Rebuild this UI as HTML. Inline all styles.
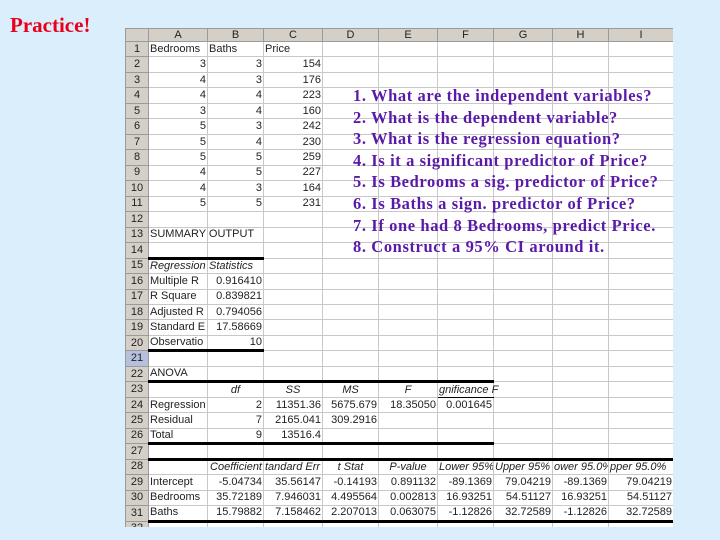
<!DOCTYPE html>
<html><head><meta charset="utf-8"><style>
body{margin:0;width:720px;height:540px;background:#dbeefb;position:relative;overflow:hidden;font-family:"Liberation Sans",sans-serif}
.title{position:absolute;left:10px;top:13px;color:#e8001c;font:bold 21px "Liberation Serif",serif}
.sheet{position:absolute;left:125px;top:28px;width:548px;height:499px;background:#fff;overflow:hidden}
table{border-collapse:collapse;table-layout:fixed;width:548px;font-size:11px;color:#222}
td{border:1px solid #c8c8c8;height:14px;padding:0 1px;white-space:nowrap;overflow:hidden;line-height:13px;box-sizing:border-box}
tr{height:15.47px}
tr.h{height:13px}
tr.h td{background:#d4d0c8;text-align:center;height:13px;border-color:#9a9a9a;line-height:11px}
td.r{background:#d4d0c8;text-align:center;border-color:#9a9a9a;padding:0}
.n{text-align:right}.i{font-style:italic}.c{text-align:center}
.v{overflow:visible}
.tt{border-top:3px solid #000}
.tb{border-bottom:1px solid #000}
.q{position:absolute;left:353px;top:85px;color:#5a1aa8;font:bold 16.5px "Liberation Serif",serif;letter-spacing:0.6px;line-height:21.6px}
</style></head><body>
<div class="title">Practice!</div>
<div class="sheet"><table>
<colgroup><col style="width:23px"><col style="width:59px"><col style="width:56px"><col style="width:59px"><col style="width:56px"><col style="width:59px"><col style="width:56px"><col style="width:59px"><col style="width:56px"><col style="width:65px"></colgroup>
<tr class="h"><td></td><td>A</td><td>B</td><td>C</td><td>D</td><td>E</td><td>F</td><td>G</td><td>H</td><td>I</td></tr>
<tr><td class="r">1</td><td>Bedrooms</td><td>Baths</td><td>Price</td><td></td><td></td><td></td><td></td><td></td><td></td></tr>
<tr><td class="r">2</td><td class="n">3</td><td class="n">3</td><td class="n">154</td><td></td><td></td><td></td><td></td><td></td><td></td></tr>
<tr><td class="r">3</td><td class="n">4</td><td class="n">3</td><td class="n">176</td><td></td><td></td><td></td><td></td><td></td><td></td></tr>
<tr><td class="r">4</td><td class="n">4</td><td class="n">4</td><td class="n">223</td><td></td><td></td><td></td><td></td><td></td><td></td></tr>
<tr><td class="r">5</td><td class="n">3</td><td class="n">4</td><td class="n">160</td><td></td><td></td><td></td><td></td><td></td><td></td></tr>
<tr><td class="r">6</td><td class="n">5</td><td class="n">3</td><td class="n">242</td><td></td><td></td><td></td><td></td><td></td><td></td></tr>
<tr><td class="r">7</td><td class="n">5</td><td class="n">4</td><td class="n">230</td><td></td><td></td><td></td><td></td><td></td><td></td></tr>
<tr><td class="r">8</td><td class="n">5</td><td class="n">5</td><td class="n">259</td><td></td><td></td><td></td><td></td><td></td><td></td></tr>
<tr><td class="r">9</td><td class="n">4</td><td class="n">5</td><td class="n">227</td><td></td><td></td><td></td><td></td><td></td><td></td></tr>
<tr><td class="r">10</td><td class="n">4</td><td class="n">3</td><td class="n">164</td><td></td><td></td><td></td><td></td><td></td><td></td></tr>
<tr><td class="r">11</td><td class="n">5</td><td class="n">5</td><td class="n">231</td><td></td><td></td><td></td><td></td><td></td><td></td></tr>
<tr><td class="r">12</td><td></td><td></td><td></td><td></td><td></td><td></td><td></td><td></td><td></td></tr>
<tr><td class="r">13</td><td class="v">SUMMARY OUTPUT</td><td></td><td></td><td></td><td></td><td></td><td></td><td></td><td></td></tr>
<tr><td class="r">14</td><td></td><td></td><td></td><td></td><td></td><td></td><td></td><td></td><td></td></tr>
<tr><td class="r">15</td><td class="i tt">Regression</td><td class="i tt">Statistics</td><td></td><td></td><td></td><td></td><td></td><td></td><td></td></tr>
<tr><td class="r">16</td><td>Multiple R</td><td class="n">0.916410</td><td></td><td></td><td></td><td></td><td></td><td></td><td></td></tr>
<tr><td class="r">17</td><td>R Square</td><td class="n">0.839821</td><td></td><td></td><td></td><td></td><td></td><td></td><td></td></tr>
<tr><td class="r">18</td><td>Adjusted R</td><td class="n">0.794056</td><td></td><td></td><td></td><td></td><td></td><td></td><td></td></tr>
<tr><td class="r">19</td><td>Standard E</td><td class="n">17.58669</td><td></td><td></td><td></td><td></td><td></td><td></td><td></td></tr>
<tr><td class="r">20</td><td>Observatio</td><td class="n">10</td><td></td><td></td><td></td><td></td><td></td><td></td><td></td></tr>
<tr><td class="r" style="background:#b6c0dc">21</td><td class="tt"></td><td class="tt"></td><td></td><td></td><td></td><td></td><td></td><td></td><td></td></tr>
<tr><td class="r">22</td><td>ANOVA</td><td></td><td></td><td></td><td></td><td></td><td></td><td></td><td></td></tr>
<tr><td class="r">23</td><td class="tt"></td><td class="tt c i">df</td><td class="tt c i">SS</td><td class="tt c i">MS</td><td class="tt c i">F</td><td class="tt i tb v">gnificance F</td><td></td><td></td><td></td></tr>
<tr><td class="r">24</td><td>Regression</td><td class="n">2</td><td class="n">11351.36</td><td class="n">5675.679</td><td class="n">18.35050</td><td class="n">0.001645</td><td></td><td></td><td></td></tr>
<tr><td class="r">25</td><td>Residual</td><td class="n">7</td><td class="n">2165.041</td><td class="n">309.2916</td><td></td><td></td><td></td><td></td><td></td></tr>
<tr><td class="r">26</td><td>Total</td><td class="n">9</td><td class="n">13516.4</td><td></td><td></td><td></td><td></td><td></td><td></td></tr>
<tr><td class="r">27</td><td class="tt"></td><td class="tt"></td><td class="tt"></td><td class="tt"></td><td class="tt"></td><td class="tt"></td><td></td><td></td><td></td></tr>
<tr><td class="r">28</td><td class="tt"></td><td class="tt i n">Coefficient</td><td class="tt i">tandard Err</td><td class="tt c i">t Stat</td><td class="tt c i">P-value</td><td class="tt i">Lower 95%</td><td class="tt i">Upper 95%</td><td class="tt i">ower 95.0%</td><td class="tt i">pper 95.0%</td></tr>
<tr><td class="r">29</td><td>Intercept</td><td class="n">-5.04734</td><td class="n">35.56147</td><td class="n">-0.14193</td><td class="n">0.891132</td><td class="n">-89.1369</td><td class="n">79.04219</td><td class="n">-89.1369</td><td class="n">79.04219</td></tr>
<tr><td class="r">30</td><td>Bedrooms</td><td class="n">35.72189</td><td class="n">7.946031</td><td class="n">4.495564</td><td class="n">0.002813</td><td class="n">16.93251</td><td class="n">54.51127</td><td class="n">16.93251</td><td class="n">54.51127</td></tr>
<tr><td class="r">31</td><td>Baths</td><td class="n">15.79882</td><td class="n">7.158462</td><td class="n">2.207013</td><td class="n">0.063075</td><td class="n">-1.12826</td><td class="n">32.72589</td><td class="n">-1.12826</td><td class="n">32.72589</td></tr>
<tr><td class="r">32</td><td class="tt"></td><td class="tt"></td><td class="tt"></td><td class="tt"></td><td class="tt"></td><td class="tt"></td><td class="tt"></td><td class="tt"></td><td class="tt"></td></tr>
</table></div>
<div class="q">1. What are the independent variables?<br>2. What is the dependent variable?<br>3. What is the regression equation?<br>4. Is it a significant predictor of Price?<br>5. Is Bedrooms a sig. predictor of Price?<br>6. Is Baths a sign. predictor of Price?<br>7. If one had 8 Bedrooms, predict Price.<br>8. Construct a 95% CI around it.</div>
</body></html>
